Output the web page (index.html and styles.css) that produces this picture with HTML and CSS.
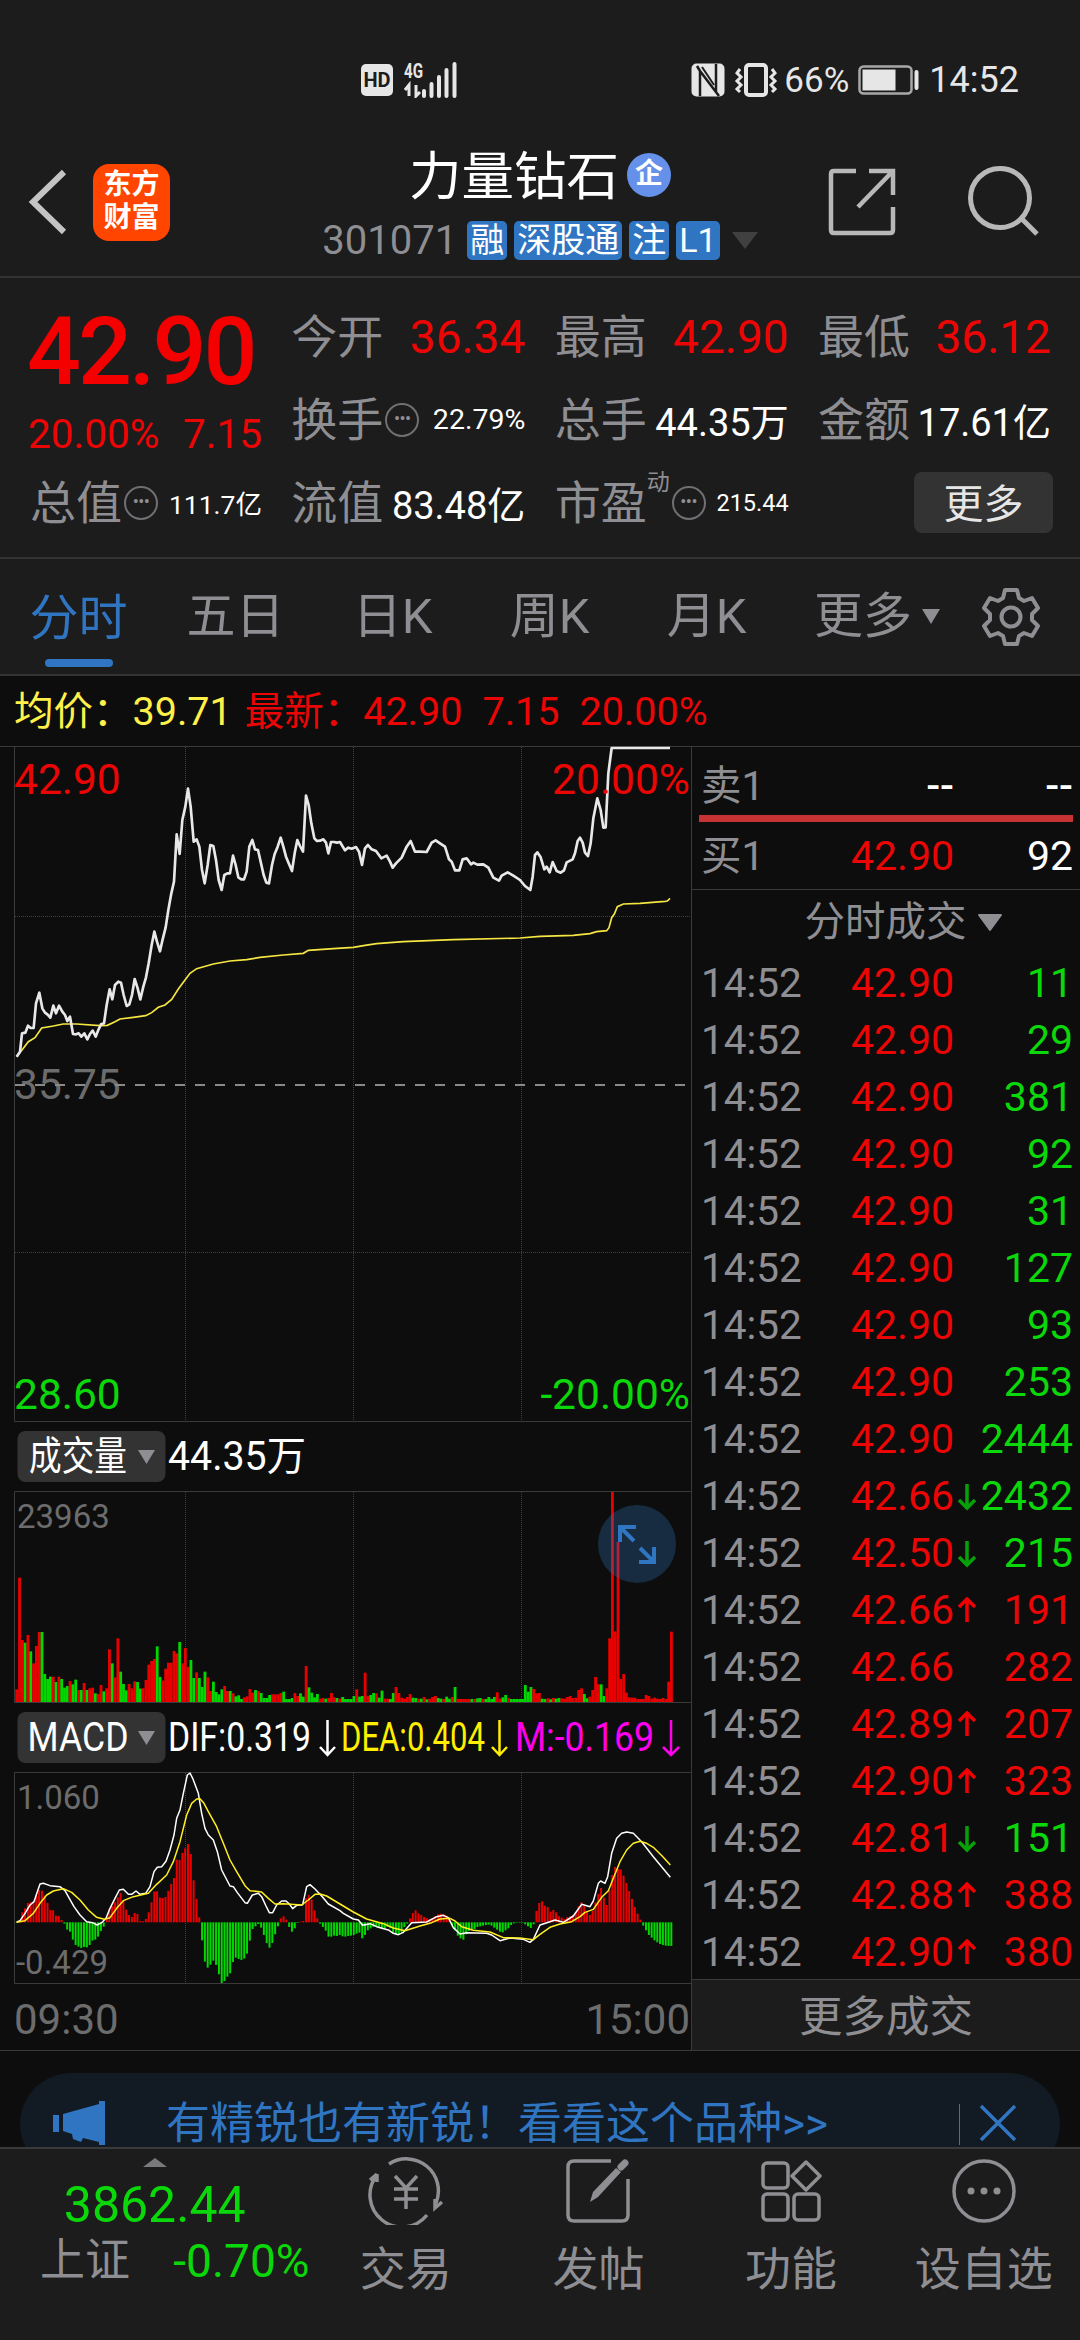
FILE: index.html
```html
<!DOCTYPE html>
<html lang="zh-CN">
<head>
    <meta charset="UTF-8">
    <meta name="viewport" content="width=device-width, initial-scale=1.0">
    <title>力量钻石 301071</title>
    <link rel="stylesheet" href="styles.css">
</head>
<body>
    <!-- Status bar -->
    <div class="status-bar">
        <div class="status-left">
            <span class="hd">HD</span>
            <svg width="54" height="42" viewBox="0 -6 54 42">
                <text x="0" y="16" class="net" textLength="19" lengthAdjust="spacingAndGlyphs">4G</text>
                <path d="M5 34V23l-4 5M12 23v11l4-4" fill="none" stroke="#e6e6e6" stroke-width="3"/>
                <path d="M20 34v-5M27.500 34V22M35 34V15M42.500 34V8M50.500 34V2" stroke="#e6e6e6" stroke-width="4" stroke-linecap="round"/>
            </svg>
        </div>
        <div class="status-right">
            <svg width="34" height="34" viewBox="0 0 34 34">
                <rect x="0.500" y="0.500" width="33" height="33" rx="5" fill="#e6e6e6"/>
                <path d="M9 33V8l16 21V1M9 8l-3-5M25 29l3 4" fill="none" stroke="#1c1c1c" stroke-width="2.500"/>
                <path d="M11 4l12 18" stroke="#1c1c1c" stroke-width="2"/>
            </svg>
            <svg width="44" height="34" viewBox="0 0 44 34" fill="none" stroke="#e6e6e6" stroke-width="3">
                <rect x="12" y="2" width="20" height="30" rx="3" stroke-width="4"/>
                <path d="M6 6l-3 4 4 4-4 4 4 4-4 4 3 3M38 6l3 4-4 4 4 4-4 4 4 4-3 3"/>
            </svg>
            <span class="percent">66%</span>
            <svg width="62" height="30" viewBox="0 0 62 30">
                <rect x="1.500" y="1.500" width="52" height="27" rx="4" fill="none" stroke="#a8a8a8" stroke-width="2.500"/>
                <rect x="4.500" y="4.500" width="33" height="21" fill="#e6e6e6"/>
                <path d="M58.500 7v16" stroke="#e6e6e6" stroke-width="4" stroke-linecap="round"/>
            </svg>
            <span class="clock">14:52</span>
        </div>
    </div>

    <!-- Header -->
    <header class="header">
        <div class="header-left">
            <svg width="40" height="68" viewBox="0 0 40 68"><path d="M36 4L5 34l31 30" fill="none" stroke="#c4c4c4" stroke-width="6"/></svg>
            <div class="logo">东方<br>财富</div>
        </div>
        <div class="header-title">
            <h1>力量钻石<span class="company">企</span></h1>
            <div class="code-row">
                <span class="code">301071</span>
                <span class="tag">融</span>
                <span class="tag">深股通</span>
                <span class="tag">注</span>
                <span class="tag">L1</span>
                <svg class="code-arrow" width="26" height="17" viewBox="0 0 26 17"><path d="M0 0h26L13 17z" fill="#404040"/></svg>
            </div>
        </div>
        <div class="header-right">
            <svg width="68" height="68" viewBox="0 0 68 68" fill="none" stroke="#b8b8b8" stroke-width="4.500">
                <path d="M28 3H6q-3 0-3 3v56q0 3 3 3h56q3 0 3-3V39"/>
                <path d="M41 3h24v24M64 4L30 39"/>
            </svg>
            <svg width="72" height="72" viewBox="0 0 72 72" fill="none" stroke="#b8b8b8" stroke-width="5">
                <circle cx="33" cy="33" r="29.500"/>
                <path d="M54 53l16 16"/>
            </svg>
        </div>
    </header>

    <!-- Quote summary -->
    <section class="quote">
        <div class="last-price red">
            <div class="price">42.90</div>
            <div class="change"><span>20.00%</span><span>7.15</span></div>
        </div>
        <div class="cell"><span class="label">今开</span><span class="num red">36.34</span></div>
        <div class="cell"><span class="label">最高</span><span class="num red">42.90</span></div>
        <div class="cell"><span class="label">最低</span><span class="num red">36.12</span></div>
        <div class="cell"><span class="label">换手<i class="dots">•••</i></span><span class="value size-29">22.79%</span></div>
        <div class="cell"><span class="label">总手</span><span class="value">44.35万</span></div>
        <div class="cell"><span class="label">金额</span><span class="value">17.61亿</span></div>
        <div class="cell"><span class="label">总值<i class="dots">•••</i></span><span class="value size-26">111.7亿</span></div>
        <div class="cell"><span class="label">流值</span><span class="value">83.48亿</span></div>
        <div class="cell"><span class="label">市盈<small>动</small><i class="dots">•••</i></span><span class="value size-24">215.44</span></div>
        <div class="cell cell-more"><button class="more-btn">更多</button></div>
    </section>

    <!-- Period tabs -->
    <nav class="tabs">
        <a class="active">分时</a>
        <a>五日</a>
        <a>日K</a>
        <a>周K</a>
        <a>月K</a>
        <a class="tab-more">更多<svg width="18" height="15" viewBox="0 0 18 15"><path d="M0 0h18L9 15z" fill="#8e8e93"/></svg></a>
        <svg width="60" height="60" viewBox="0 0 60 60" fill="none" stroke="#8e8e93" stroke-width="4">
            <path d="M24 3h12l2 8 5 3 8-3 6 10-6 6v6l6 6-6 10-8-3-5 3-2 8H24l-2-8-5-3-8 3-6-10 6-6v-6l-6-6 6-10 8 3 5-3z" stroke-linejoin="round"/>
            <circle cx="30" cy="30" r="9.500"/>
        </svg>
    </nav>

    <div class="average">
        <span class="yellow">均价：39.71</span>
        <span class="red">最新：42.90</span>
        <span class="red">7.15</span>
        <span class="red">20.00%</span>
    </div>

    <main class="main">
        <!-- Charts -->
        <div class="charts">
            <svg class="chart" width="677" height="676" viewBox="0 0 677 676">
                <path class="frame" d="M677 .5H.5v675H677"/>
                <path class="grid" d="M171.500 1v674M339.500 1v674M507.500 1v674M1 170.500h675M1 506.500h675"/>
                <text x="0" y="353" class="axis grey">35.75</text>
                <path class="middle" d="M1 339h675"/>
                <g transform="translate(-14 -6) scale(.33333)" fill="none">
                    <polyline class="avg-line" points="50,950 66,930 85,905 105,893 125,864 160,858 190,852 230,852 300,857 322,856 345,845 360,837 400,832 437,827 455,818 475,802 495,795 515,778 535,747 550,727 570,700 590,686 640,672 690,663 740,659 780,652 850,645 910,640 925,631 1000,626 1060,622 1095,616 1130,611 1210,605 1360,599 1560,594 1620,589 1720,586 1770,581 1790,575 1820,572 1827,563 1835,533 1843,522 1852,500 1870,492 1920,490 1995,484 2002,483 2010,475"/>
                    <polyline class="price-line" points="50,950 60,935 66,880 76,878 84,857 92,864 101,864 108,790 118,758 127,805 135,818 143,824 151,833 160,797 168,820 177,797 187,815 195,825 202,843 210,830 219,882 228,883 236,880 244,890 253,880 262,898 270,882 278,872 287,890 295,870 303,853 312,850 320,795 329,748 337,778 345,735 355,725 363,728 371,765 380,798 388,793 396,765 404,717 413,745 421,778 430,740 438,712 446,670 455,615 463,575 471,605 480,634 488,598 497,562 505,510 514,460 522,425 530,283 539,342 547,240 556,200 564,146 572,200 581,305 590,298 598,320 606,390 614,430 623,375 631,315 640,318 648,360 656,420 665,450 673,405 682,400 690,400 699,347 707,375 715,412 724,418 732,418 740,395 748,320 757,300 765,328 774,330 783,370 791,405 799,428 807,430 816,375 824,342 833,320 842,293 850,320 858,350 867,372 876,393 884,340 892,300 900,318 909,335 918,167 926,195 934,250 943,295 951,303 960,302 970,298 978,308 985,340 993,306 1002,306 1011,308 1020,306 1035,331 1045,323 1055,326 1068,321 1077,335 1086,375 1095,325 1104,315 1115,328 1128,333 1144,355 1160,347 1170,365 1178,383 1188,370 1205,353 1220,320 1232,303 1245,335 1260,335 1280,336 1295,308 1307,301 1320,310 1335,320 1347,358 1355,365 1365,391 1378,391 1388,358 1400,355 1413,373 1420,368 1432,374 1450,373 1465,383 1480,413 1497,422 1505,407 1523,397 1540,407 1560,420 1575,438 1591,450 1598,410 1605,345 1612,337 1622,352 1633,388 1640,380 1649,397 1658,366 1670,393 1682,398 1692,391 1700,367 1718,358 1725,340 1733,303 1740,293 1748,308 1755,338 1764,348 1772,310 1780,235 1792,175 1802,210 1810,263 1817,262 1825,100 1835,24 2010,24"/>
                </g>
                <text x="0" y="48" class="axis red">42.90</text>
                <text x="676" y="48" class="axis red end">20.00%</text>
                <text x="0" y="663" class="axis green">28.60</text>
                <text x="676" y="663" class="axis green end">-20.00%</text>
            </svg>

            <svg class="indicator" width="677" height="69" viewBox="0 0 677 69">
                <rect x="3.500" y="9" width="148" height="51" rx="8"/>
                <text x="15" y="48" textLength="98" lengthAdjust="spacingAndGlyphs">成交量</text>
                <path d="M124 28h17l-8.500 14z" fill="#8e8e93"/>
                <text x="154" y="48" textLength="138" lengthAdjust="spacingAndGlyphs">44.35万</text>
            </svg>

            <div class="volume-box">
                <svg class="chart" width="677" height="212" viewBox="0 0 677 212">
                    <path class="frame" d="M677 .5H.5v211H677"/>
                    <path class="grid" d="M171.500 1v210M339.500 1v210M507.500 1v210"/>
                    <g id="volume"></g>
                    <text x="3" y="37" class="scale">23963</text>
                </svg>
                <svg class="expand" width="78" height="78" viewBox="0 0 78 78" fill="none" stroke="#3075c2" stroke-width="4">
                    <circle cx="39" cy="39" r="39" stroke="none" fill="#2f70ba" fill-opacity=".3"/>
                    <path d="M38 22H22v15M23 23l13 13M41 57h15V42M55 56L42 43"/>
                </svg>
            </div>

            <svg class="indicator" width="677" height="69" viewBox="0 0 677 69">
                <rect x="3.500" y="9" width="148" height="51" rx="8"/>
                <text x="13.500" y="48" textLength="101" lengthAdjust="spacingAndGlyphs">MACD</text>
                <path d="M124 28h17l-8.500 14z" fill="#8e8e93"/>
                <text x="154" y="48" textLength="143" lengthAdjust="spacingAndGlyphs">DIF:0.319</text>
                <path class="arrow" stroke="#fff" d="M313.500 17v34M306 44l7.500 8 7.500-8"/>
                <text x="327" y="48" fill="#ffee00" textLength="144" lengthAdjust="spacingAndGlyphs">DEA:0.404</text>
                <path class="arrow" stroke="#ffee00" d="M485.500 17v34M478 44l7.500 8 7.500-8"/>
                <text x="501" y="48" fill="#ff00ee" textLength="139" lengthAdjust="spacingAndGlyphs">M:-0.169</text>
                <path class="arrow" stroke="#ff00ee" d="M657 17v34M649 44l8 8 8-8"/>
            </svg>

            <svg class="chart" width="677" height="212" viewBox="0 0 677 212">
                <path class="frame" d="M677 .5H.5v211H677"/>
                <path class="grid" d="M171.500 1v210M339.500 1v210M507.500 1v210"/>
                <g id="macd"></g>
                <g transform="translate(-14 -72) scale(.33333)" fill="none" stroke-width="4.500" stroke-linejoin="round">
                    <polyline stroke="#fff" points="50,666 60,662 75,640 90,615 102,605 112,575 120,552 130,550 150,557 180,560 195,572 205,590 222,620 240,645 260,665 278,668 291,675 305,668 318,655 330,625 345,595 358,570 370,568 385,583 395,583 408,573 420,583 437,580 450,560 462,515 472,502 485,500 498,484 510,450 522,405 530,355 540,330 550,280 562,225 570,219 578,235 595,280 605,340 615,385 625,405 640,420 652,455 665,510 690,558 700,560 712,578 735,608 742,610 757,585 775,580 785,590 798,618 808,638 818,638 830,615 845,603 858,603 868,612 878,626 890,616 908,614 920,560 930,554 945,567 965,588 985,612 1020,632 1030,640 1060,657 1075,660 1088,676 1110,671 1130,680 1165,690 1180,700 1195,704 1210,697 1235,668 1280,666 1310,650 1330,646 1345,653 1360,683 1380,702 1400,698 1460,700 1475,705 1500,722 1530,714 1570,718 1590,727 1600,718 1620,675 1650,665 1665,660 1690,667 1720,648 1745,613 1770,620 1780,603 1795,550 1802,543 1815,550 1823,530 1835,460 1850,415 1865,400 1880,396 1900,400 1925,425 1960,470 2011,532"/>
                    <polyline stroke="#ffee22" points="50,667 75,662 100,640 120,610 140,585 160,573 190,566 215,577 240,600 265,630 290,652 313,658 330,653 350,625 370,602 400,590 445,580 470,553 500,525 520,485 540,425 560,345 575,310 590,297 600,296 612,310 625,335 650,380 670,430 690,480 710,515 735,557 750,572 785,576 805,595 825,612 850,611 905,615 925,600 945,583 960,582 980,588 1020,612 1060,636 1100,657 1150,671 1180,684 1215,692 1260,678 1295,668 1320,657 1350,655 1365,663 1385,680 1420,691 1470,696 1510,713 1560,714 1600,719 1620,703 1650,682 1680,672 1715,665 1740,650 1755,637 1780,628 1805,592 1825,572 1840,535 1860,485 1880,450 1900,430 1920,424 1940,430 1960,442 1990,472 2011,495"/>
                </g>
                <text x="3" y="37" class="scale">1.060</text>
                <text x="2" y="202" class="scale">-0.429</text>
            </svg>

            <div class="time-axis"><span>09:30</span><span>15:00</span></div>
        </div>

        <!-- Order book and trades -->
        <aside class="side">
            <div class="book">
                <div class="row"><span class="time">卖1</span><span class="deal dash">--</span><span class="vol dash">--</span></div>
                <div class="ratio"></div>
                <div class="row"><span class="time">买1</span><span class="deal red">42.90</span><span class="vol">92</span></div>
            </div>
            <div class="trades-title">分时成交<svg width="26" height="18" viewBox="0 0 26 18"><path d="M2 1h22L13 16z" fill="#8e8e93" stroke="#8e8e93" stroke-width="2" stroke-linejoin="round"/></svg></div>
            <div class="trades" id="trades"></div>
            <div class="trades-more">更多成交</div>
        </aside>
    </main>

    <!-- Promotion -->
    <div class="promo">
        <div class="promo-inner">
            <svg width="52" height="46" viewBox="0 0 52 46" fill="#3075c2"><path d="M0 14h6v17H0zM10 13L46 3V0h6v44h-6v-3l-16-4-2 4-8-3-1-5-9-3z"/></svg>
            <span class="promo-text">有精锐也有新锐！看看这个品种&gt;&gt;</span>
            <span class="promo-close"><svg width="38" height="38" viewBox="0 0 38 38"><path d="M2 2l34 34M36 2L2 36" stroke="#3075c2" stroke-width="3.500"/></svg></span>
        </div>
    </div>

    <!-- Bottom bar -->
    <footer class="bottom">
        <div class="index">
            <svg width="24" height="9" viewBox="0 0 24 9"><path d="M0 9L12 0l12 9z" fill="#7a7a7d"/></svg>
            <div class="index-value green">3862.44</div>
            <div class="index-row"><span>上证</span><span class="green">-0.70%</span></div>
        </div>
        <div class="item">
            <svg width="76" height="68" viewBox="0 0 76 68" fill="none" stroke="#8e8e93" stroke-width="3.500">
                <path d="M21 7A32 32 0 0 1 68 46M59 58A32 32 0 0 1 9 18M2 23l7-6M9 17v8M74 45l-7 6v-9"/>
                <path d="M27 19l11 12 11-12M38 31v21M26 32h24M26 42h24"/>
            </svg>
            <span>交易</span>
        </div>
        <div class="item">
            <svg width="66" height="68" viewBox="0 0 66 68" fill="none" stroke="#8e8e93" stroke-width="3.500">
                <path d="M46 4H9q-6 0-6 6v48q0 6 6 6h48q6 0 6-6V22"/>
                <path d="M25 45l3-10 23-24 5 4-23 25z" fill="#8e8e93" stroke="none"/>
                <path d="M56 10l4-4" stroke-width="7" stroke-linecap="round"/>
            </svg>
            <span>发帖</span>
        </div>
        <div class="item">
            <svg width="62" height="68" viewBox="0 0 62 68" fill="none" stroke="#8e8e93" stroke-width="3.500">
                <rect x="3" y="6" width="25" height="25" rx="4"/>
                <rect x="3" y="37" width="25" height="26" rx="4"/>
                <rect x="34" y="37" width="25" height="26" rx="4"/>
                <path d="M46 5l14 14-14 14-14-14z" stroke-linejoin="round"/>
            </svg>
            <span>功能</span>
        </div>
        <div class="item">
            <svg width="68" height="68" viewBox="0 0 68 68" fill="none" stroke="#8e8e93" stroke-width="3.500">
                <circle cx="34" cy="34" r="30"/>
                <g fill="#8e8e93" stroke="none"><circle cx="21" cy="34" r="3.500"/><circle cx="34" cy="34" r="3.500"/><circle cx="47" cy="34" r="3.500"/></g>
            </svg>
            <span>设自选</span>
        </div>
    </footer>

    <script src="script.js"></script>
</body>
</html>
```
FILE: styles.css
```css
/* General Styles */
* {
    box-sizing: border-box;
}

body {
    margin: 0;
    width: 1080px;
    height: 2340px;
    overflow: hidden;
    background-color: #1c1c1c;
    color: #8e8e93;
    font-family: Roboto, "Noto Sans CJK SC", sans-serif;
    display: flex;
    flex-direction: column;
}

svg {
    display: block;
    flex-shrink: 0;
}

.red {
    color: #eb0505;
    fill: #eb0505;
}

.green {
    color: #0bd80b;
    fill: #0bd80b;
}

.grey {
    fill: #6c6c6c;
}

.yellow {
    color: #fff04a;
}

/* Status Bar */
.status-bar {
    height: 110px;
    padding: 50px 61px 0 361px;
    display: flex;
    justify-content: space-between;
    align-items: flex-start;
    color: #e6e6e6;
    font-size: 36px;
}

.status-left, .status-right {
    height: 60px;
    display: flex;
    align-items: center;
}

.status-left {
    gap: 11px;
}

.status-left svg {
    margin-top: -6px;
}

.hd {
    width: 32px;
    height: 32px;
    border-radius: 5px;
    background-color: #e6e6e6;
    color: #1c1c1c;
    font-size: 20px;
    font-weight: 700;
    line-height: 33px;
    text-align: center;
}

.net {
    fill: #e6e6e6;
    font-size: 20px;
    font-weight: 700;
}

.status-right {
    gap: 9px;
}

.percent {
    font-size: 35px;
    margin-left: -3px;
}

/* Header */
.header {
    height: 168px;
    border-bottom: 2px solid #333;
    display: flex;
}

.header-left, .header-right {
    width: 270px;
    display: flex;
    padding-top: 54px;
}

.header-left {
    padding-left: 28px;
    gap: 25px;
}

.header-left svg {
    margin-top: 4px;
}

.logo {
    width: 77px;
    height: 77px;
    border-radius: 16px;
    background-color: #ff4500;
    color: #fff;
    font-size: 28px;
    font-weight: 700;
    line-height: 33px;
    padding-top: 4px;
    text-align: center;
}

.header-right {
    padding-left: 18px;
    gap: 71px;
    padding-top: 58px;
}

.header-right svg + svg {
    margin-top: -3px;
}

.header-title {
    flex: 1;
    display: flex;
    flex-direction: column;
    align-items: center;
}

h1 {
    margin: 32px 0 0;
    height: 70px;
    color: #fff;
    font-size: 52.5px;
    font-weight: 400;
    line-height: 70px;
    display: flex;
    align-items: center;
    gap: 8px;
}

.company {
    width: 44px;
    height: 44px;
    border-radius: 50%;
    background-color: #6691ea;
    font-size: 28px;
    font-weight: 700;
    line-height: 42px;
    text-align: center;
    margin-top: -4px;
}

.code-row {
    margin-top: 9px;
    height: 39px;
    display: flex;
    align-items: center;
    gap: 7px;
}

.code {
    font-size: 40px;
    margin-right: 3px;
}

.tag {
    height: 39px;
    padding: 0 3px;
    border-radius: 5px;
    background-color: #3075c2;
    color: #fff;
    font-size: 34px;
    line-height: 38px;
}

.code-arrow {
    margin-left: 5px;
}

/* Quote */
.quote {
    height: 281px;
    padding: 17px 29px 0 30px;
    border-bottom: 2px solid #333;
    display: grid;
    grid-template-columns: 232px 234px 234px 233px;
    grid-template-rows: repeat(3, 83px);
    justify-content: space-between;
}

.last-price {
    grid-row: span 2;
}

.price {
    height: 110px;
    color: #f40000;
    font-size: 95px;
    font-weight: 500;
    line-height: 114px;
    letter-spacing: -3px;
    margin-left: -3px;
}

.change {
    display: flex;
    justify-content: space-between;
    font-size: 40.5px;
    line-height: 58px;
    margin-left: -2px;
}

.cell {
    display: flex;
    align-items: center;
    justify-content: space-between;
    white-space: nowrap;
}

.label {
    display: flex;
    align-items: center;
    font-size: 46px;
    line-height: 60px;
}

.label small {
    font-size: 23px;
    line-height: 24px;
    margin-bottom: 40px;
}

.dots {
    width: 34px;
    height: 34px;
    margin-left: 2px;
    border: 2.5px solid #707074;
    border-radius: 50%;
    font-size: 18px;
    letter-spacing: -0.5px;
    font-style: normal;
    line-height: 28px;
    text-align: center;
}

.num {
    font-size: 46px;
}

.value {
    color: #fff;
    font-size: 38px;
}

.size-29 {
    font-size: 28.5px;
}

.size-26 {
    font-size: 26.5px;
}

.size-24 {
    font-size: 23.5px;
}

.cell-more {
    justify-content: flex-end;
}

.more-btn {
    width: 139px;
    height: 61px;
    border: 0;
    border-radius: 8px;
    background-color: #333;
    color: #e6e6e6;
    font-family: inherit;
    font-size: 40px;
    padding: 0 0 6px;
    margin-right: -2px;
}

/* Tabs */
.tabs {
    height: 117px;
    border-bottom: 2px solid #333;
    display: flex;
    font-size: 49px;
    line-height: 120px;
}

.tabs a {
    width: 157px;
    display: flex;
    align-items: center;
    justify-content: center;
    gap: 10px;
}

.tabs .tab-more {
    width: 184px;
}

.tabs > svg {
    margin: 28px 0 0 12px;
}

.tabs .active {
    color: #3075c2;
    flex-direction: column;
    justify-content: flex-start;
    gap: 0;
}

.active::after {
    content: "";
    width: 68px;
    height: 8px;
    border-radius: 4px;
    background-color: #3075c2;
    margin-top: -20px;
}

.average {
    height: 70px;
    padding-left: 14px;
    background-color: #0d0d0d;
    font-size: 39.5px;
    line-height: 71px;
    display: flex;
}

.average span + span {
    margin-left: 20px;
}

.average .yellow + span {
    margin-left: 13px;
}

/* Main */
.main {
    height: 1305px;
    background-color: #0d0d0d;
    border-top: 1px solid #3a3a3a;
    border-bottom: 1px solid #3a3a3a;
    display: flex;
}

.charts {
    width: 692px;
    padding-left: 14px;
    margin-top: -1px;
    border-right: 1px solid #3a3a3a;
}

.frame {
    fill: none;
    stroke: #3a3a3a;
}

.grid {
    stroke: #404040;
    stroke-width: 1;
    stroke-dasharray: 1 1;
}

.middle {
    stroke: #8a8a8a;
    stroke-width: 2;
    stroke-dasharray: 10 10;
}

.price-line {
    stroke: #e8e8e8;
    stroke-width: 8;
    stroke-linejoin: round;
}

.avg-line {
    stroke: #f5e642;
    stroke-width: 5;
}

.axis {
    font-size: 42.5px;
}

.end {
    text-anchor: end;
}

.scale {
    fill: #6c6c6c;
    font-size: 33px;
}

.indicator rect {
    fill: #333;
}

.indicator text {
    font-size: 40px;
}

.indicator text:not([fill]) {
    fill: #fff;
}

.arrow {
    fill: none;
    stroke-width: 2.5;
}

.volume-box {
    position: relative;
}

.expand {
    position: absolute;
    left: 584px;
    top: 14px;
}

.up {
    fill: #eb0000;
}

.down {
    fill: #00d800;
}

.time-axis {
    height: 68px;
    padding-right: 1px;
    color: #6c6c6c;
    font-size: 42px;
    line-height: 71px;
    display: flex;
    justify-content: space-between;
}

/* Side Panel */
.side {
    flex: 1;
    font-size: 41px;
}

.book {
    height: 143px;
    border-bottom: 1px solid #3a3a3a;
}

.row {
    height: 57px;
    padding: 0 7px 0 9px;
    line-height: 57px;
    display: grid;
    grid-template-columns: 149px 104px 24px 1fr;
}

.book .row {
    height: 68px;
    line-height: 78px;
}

.book .ratio + .row {
    line-height: 68px;
}

.time {
    font-size: 40.5px;
}

.vol {
    grid-column: 4;
    text-align: right;
    justify-self: end;
    direction: rtl;
}

.deal {
    text-align: right;
}

.book .vol, .dash {
    color: #fff;
}

.dash {
    font-weight: 500;
}

.row svg {
    align-self: center;
    margin-left: 3px;
}

.ratio {
    height: 7px;
    margin: 0 7px;
    background-color: #c73232;
}

.trades-title {
    height: 65px;
    padding-left: 35px;
    font-size: 40.5px;
    line-height: 65px;
    display: flex;
    align-items: center;
    justify-content: center;
    gap: 10px;
}

.trades {
    height: 1024px;
}

.trades-more {
    height: 71px;
    background-color: #1c1c1c;
    border-top: 1px solid #3a3a3a;
    font-size: 43.5px;
    line-height: 75px;
    text-align: center;
}

/* Promotion */
.promo {
    height: 96px;
    padding: 22px 20px 0;
    background-color: #0d0d0d;
    overflow: hidden;
}

.promo-inner {
    height: 102px;
    border-radius: 51px;
    background-color: #121a23;
    color: #3075c2;
    font-size: 44px;
    padding: 0 43px 0 33px;
    display: flex;
    align-items: center;
}

.promo-text {
    margin-left: 61px;
    line-height: 44px;
    white-space: nowrap;
}

.promo-close {
    height: 41px;
    margin-left: auto;
    padding-left: 19px;
    border-left: 1px solid #3075c2;
    display: flex;
}

/* Bottom Bar */
.bottom {
    height: 193px;
    border-top: 2px solid #3a3a3a;
    display: flex;
    font-size: 46px;
}

.index {
    width: 310px;
    display: flex;
    flex-direction: column;
    align-items: center;
    padding-top: 9px;
}

.index-value {
    height: 60px;
    font-size: 50px;
    line-height: 60px;
    margin-top: 8px;
}

.index-row {
    align-self: stretch;
    display: flex;
    justify-content: space-between;
    padding-left: 40px;
    line-height: 52px;
}

.index-row span:first-child {
    font-size: 45px;
}

.item {
    width: 193px;
    display: flex;
    flex-direction: column;
    align-items: center;
    padding-top: 8px;
    line-height: 60px;
}

.item span {
    margin-top: 14px;
}
```
FILE: script.js
```javascript
// One value per minute from 09:30, positive = up (red), negative = down (green)
const volume = [
    38,373,186,-178,201,-152,116,168,210,-210,-84,-69,-76,76,-60,76,-69,-43,-48,63,
    -53,-67,36,-36,57,-36,41,43,-26,24,51,-32,41,158,-116,74,191,-91,-54,-35,
    54,41,62,-60,-40,41,66,112,123,129,-167,-75,64,100,118,118,153,146,-180,116,
    162,105,-126,-72,89,-72,-45,-91,74,33,-61,-30,-23,-38,48,33,-33,26,-17,-20,
    -9,14,17,39,28,-36,33,-27,-12,-12,-21,23,23,23,27,-31,-9,-9,-12,27,
    18,-26,-16,108,-44,-28,-14,-24,10,12,-10,12,27,14,-12,10,-15,-9,-9,-9,
    -18,38,-16,-18,88,18,-21,-27,26,-13,-34,10,10,-9,-27,45,27,13,10,15,
    24,-13,-12,10,-10,15,-8,10,15,18,-12,-10,9,-16,-10,15,-45,9,9,9,
    9,9,-9,9,-11,-12,9,-9,-15,-9,-15,29,10,-14,-21,12,-9,-9,-9,-9,
    -9,-51,-31,-45,39,26,27,-10,-9,11,-8,12,-10,-12,11,10,15,18,12,13,
    36,41,-24,-11,16,36,75,53,-53,-18,41,191,630,212,480,69,84,28,14,13,
    13,9,9,9,21,18,10,13,10,9,12,9,61,211
];

const macd = [
    0,2,30,42,58,60,60,80,97,95,80,58,37,36,20,19,7,-4,-22,-28,
    -52,-68,-73,-77,-74,-75,-68,-55,-52,-43,-26,-13,12,40,48,60,75,88,64,38,
    22,16,28,25,4,3,10,30,60,92,93,74,73,76,94,115,133,188,187,208,
    222,235,205,126,70,15,-54,-118,-136,-127,-115,-128,-156,-182,-176,-163,-153,-119,-106,-110,
    -113,-109,-94,-55,-20,-12,-5,-16,-38,-62,-76,-62,-36,-12,12,18,8,-14,-28,-18,
    -2,2,4,72,82,68,36,12,-4,-14,-25,-43,-43,-40,-41,-38,-42,-43,-41,-40,
    -38,-34,-31,-48,-38,-24,-18,-14,-12,-16,-20,-18,-14,-18,-30,-36,-38,-30,-14,-4,
    12,28,36,27,22,16,12,10,12,18,24,26,24,20,12,-8,-24,-40,-48,-52,
    -36,-26,-20,-20,-14,-12,-10,-8,-7,-10,-16,-22,-28,-30,-24,-18,-8,-3,-1,0,
    -1,-6,-12,-17,-6,34,58,63,50,46,32,37,30,18,14,10,16,18,22,30,
    48,60,50,34,22,34,60,85,103,74,52,96,142,166,160,158,140,118,94,70,
    46,26,8,-10,-24,-38,-46,-54,-60,-65,-68,-70,-71,-71
];

const STEP = 2.81;

function bar(x, y, width, height, cls) {
    return `<rect class="${cls}" x="${x.toFixed(2)}" y="${y.toFixed(2)}" width="${width}" height="${height.toFixed(2)}"/>`;
}

document.getElementById("volume").innerHTML = volume.map((v, i) => {
    const h = Math.abs(v) / 3;
    return bar(1.3 + i * STEP, 211 - h, 2.81, h, v > 0 ? "up" : "down");
}).join("");

document.getElementById("macd").innerHTML = macd.map((v, i) => {
    const h = Math.max(Math.abs(v) / 3, 0.5);
    return bar(1.6 + i * STEP, v > 0 ? 150.3 - h : 150.3, 2, h, v > 0 ? "up" : "down");
}).join("");

// price, direction, volume, side
const trades = [
    ["42.90", "", 11, "green"],
    ["42.90", "", 29, "green"],
    ["42.90", "", 381, "green"],
    ["42.90", "", 92, "green"],
    ["42.90", "", 31, "green"],
    ["42.90", "", 127, "green"],
    ["42.90", "", 93, "green"],
    ["42.90", "", 253, "green"],
    ["42.90", "", 2444, "green"],
    ["42.66", "down", 2432, "green"],
    ["42.50", "down", 215, "green"],
    ["42.66", "up", 191, "red"],
    ["42.66", "", 282, "red"],
    ["42.89", "up", 207, "red"],
    ["42.90", "up", 323, "red"],
    ["42.81", "down", 151, "green"],
    ["42.88", "up", 388, "red"],
    ["42.90", "up", 380, "red"]
];

const arrows = {
    "": "",
    up: '<svg width="20" height="28" viewBox="0 0 20 28"><path d="M10 25V2M2 10l8-8 8 8" fill="none" stroke="#f00000" stroke-width="3.5"/></svg>',
    down: '<svg width="20" height="28" viewBox="0 0 20 28"><path d="M10 1v24M2 17l8 8 8-8" fill="none" stroke="#08a008" stroke-width="3.5"/></svg>'
};

document.getElementById("trades").innerHTML = trades.map(([price, dir, vol, side]) =>
    `<div class="row"><span class="time">14:52</span><span class="deal red">${price}</span>${arrows[dir]}<span class="vol ${side}">${vol}</span></div>`
).join("");
```
